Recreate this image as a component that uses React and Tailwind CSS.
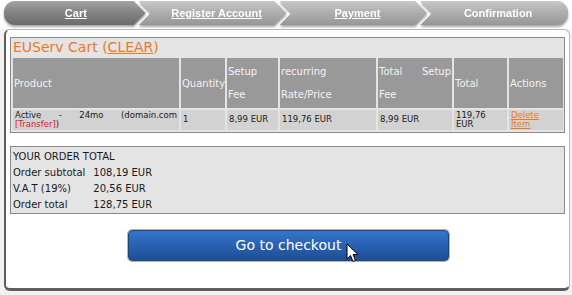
import React from "react";

const steps = [
  { label: "Cart", active: true, link: true },
  { label: "Register Account", link: true },
  { label: "Payment", link: true },
  { label: "Confirmation", link: false },
];

const clipFirst =
  "[clip-path:polygon(0_0,calc(100%_-_12px)_0,100%_50%,calc(100%_-_12px)_100%,0_100%)]";
const clipMid =
  "[clip-path:polygon(0_0,calc(100%_-_12px)_0,100%_50%,calc(100%_-_12px)_100%,0_100%,12px_50%)]";
const clipLast = "[clip-path:polygon(0_0,100%_0,100%_100%,0_100%,12px_50%)]";

const StepBar = () => (
  <div className="mx-[4px] flex h-[24px] pt-0 drop-shadow-[0_2px_1px_rgba(0,0,0,0.35)]">
    {steps.map((s, i) => {
      const clip = i === 0 ? clipFirst : i === steps.length - 1 ? clipLast : clipMid;
      const round =
        i === 0 ? "rounded-l-[11px]" : i === steps.length - 1 ? "rounded-r-[11px]" : "";
      const bg = s.active
        ? "bg-linear-to-b from-[#a3a3a3] via-[#828282] to-[#6b6b6b]"
        : "bg-linear-to-b from-[#c8c8c8] via-[#adadad] to-[#979797]";
      return (
        <div
          key={s.label}
          className={`flex flex-1 items-center justify-center ${i > 0 ? "-ml-[7px] pl-[8px]" : "pl-[2px]"} ${clip} ${round} ${bg}`}
        >
          <span
            className={`font-['Liberation_Sans'] text-[11px] font-bold text-white ${s.link ? "underline" : ""}`}
          >
            {s.label}
          </span>
        </div>
      );
    })}
  </div>
);

const Cursor = () => (
  <svg
    width="14"
    height="21"
    viewBox="0 0 14 21"
    className="absolute left-[217px] top-[12px]"
  >
    <path
      d="M1 1 L1 16 L4.5 12.5 L7 18.5 L9.5 17.5 L7 11.5 L12 11.5 Z"
      fill="#fff"
      stroke="#000"
      strokeWidth="1"
      strokeLinejoin="miter"
    />
  </svg>
);

export default function App() {
  return (
    <div className="relative h-[295px] w-[572px] overflow-hidden bg-[#f2f2f2] font-['DejaVu_Sans',sans-serif]">
      <div className="bg-white pt-[1px] pb-[4px]">
        <StepBar />
      </div>

      <div className="ml-[4px] h-[262px] w-[566px] rounded-[6px] border border-[#b8b8b8] border-l-2 border-l-[#5e5e5e] border-b-[3px] border-b-[#5e5e5e] bg-white pl-[4px] pt-[7px]">
        <div className="w-[555px] border border-[#8a8a8a] bg-[#e4e4e4]">
          <div className="h-[18px] pl-[2px] text-[14px] leading-[19px] text-[#f0781e]">
            EUServ Cart (<span className="underline">CLEAR</span>)
          </div>
          <table className="w-full table-fixed border-separate border-spacing-[2px] text-[10px]">
            <colgroup>
              <col className="w-[166px]" />
              <col className="w-[44px]" />
              <col className="w-[51px]" />
              <col className="w-[96px]" />
              <col className="w-[74px]" />
              <col className="w-[53px]" />
              <col className="w-[54px]" />
            </colgroup>
            <thead>
              <tr className="h-[50px] bg-[#999999] text-left align-middle leading-[23px] text-[#f2f2f2]">
                <th className="px-[1px] font-normal">Product</th>
                <th className="px-[1px] font-normal">Quantity</th>
                <th className="px-[1px] font-normal">
                  Setup
                  <br />
                  Fee
                </th>
                <th className="px-[1px] font-normal">
                  recurring
                  <br />
                  Rate/Price
                </th>
                <th className="px-[1px] text-justify font-normal">Total Setup Fee</th>
                <th className="px-[1px] font-normal">Total</th>
                <th className="px-[1px] font-normal">Actions</th>
              </tr>
            </thead>
            <tbody>
              <tr className="h-[20px] bg-[#d2d2d2] align-middle text-[8.5px] leading-[9.5px] text-[#1a1a1a]">
                <td className="px-[2px] text-justify">
                  Active - 24mo (domain.com <span className="text-[#e8141a]">[Transfer]</span>)
                </td>
                <td className="px-[2px]">1</td>
                <td className="px-[2px]">8,99 EUR</td>
                <td className="px-[2px]">119,76 EUR</td>
                <td className="px-[2px]">8,99 EUR</td>
                <td className="px-[2px]">
                  119,76
                  <br />
                  EUR
                </td>
                <td className="px-[2px] text-[#f0781e] underline">
                  Delete
                  <br />
                  Item
                </td>
              </tr>
            </tbody>
          </table>
        </div>

        <div className="mt-[13px] h-[68px] w-[555px] border border-[#8a8a8a] bg-[#e4e4e4] px-[2px] py-[2px] text-[10px] leading-[16px] text-[#1a1a1a]">
          <div>YOUR ORDER TOTAL</div>
          <table className="border-collapse">
            <tbody>
              <tr>
                <td className="pr-[8px]">Order subtotal</td>
                <td>108,19 EUR</td>
              </tr>
              <tr>
                <td className="pr-[8px]">V.A.T (19%)</td>
                <td>20,56 EUR</td>
              </tr>
              <tr>
                <td className="pr-[8px]">Order total</td>
                <td>128,75 EUR</td>
              </tr>
            </tbody>
          </table>
        </div>

        <div className="mt-[16px] flex justify-center pr-[2px]">
          <div className="relative flex h-[31px] w-[321px] items-center justify-center rounded-[4px] border border-[#1c447e] bg-linear-to-b from-[#3575cb] to-[#1e4e96] text-[14px] text-white shadow-[0_0_0_1px_#b8b8b8]">
            Go to checkout
            <Cursor />
          </div>
        </div>
      </div>
    </div>
  );
}
